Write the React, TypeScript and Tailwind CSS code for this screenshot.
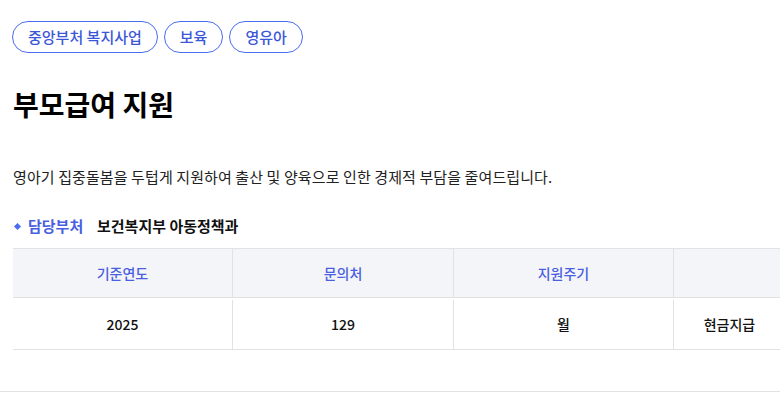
import React from "react";

const tags = ["중앙부처 복지사업", "보육", "영유아"];

const columns = [
  { head: "기준연도", value: "2025", w: "w-[219px]" },
  { head: "문의처", value: "129", w: "w-[221px]" },
  { head: "지원주기", value: "월", w: "w-[220px]" },
  { head: "", value: "현금지급", w: "w-[112px]" },
];

export default function App() {
  return (
    <div className="h-[410px] w-[780px] overflow-hidden bg-white font-['Noto_Sans_CJK_KR','Noto_Sans',sans-serif] text-[#222]">
      <div className="pl-3 pt-[21px]">
        <div className="flex gap-[6px]">
          {tags.map((t) => (
            <span
              key={t}
              className="flex h-[32px] items-center rounded-full border border-[#4a6cf0] px-[15px] text-[15px] font-medium text-[#3b57d8]"
            >
              {t}
            </span>
          ))}
        </div>

        <h1 className="mt-[33px] pl-px text-[28px] font-bold leading-[36px] text-black">
          부모급여 지원
        </h1>

        <p className="mt-[44px] pl-px text-[15px] leading-[22px] tracking-[0.1px]">
          영아기 집중돌봄을 두텁게 지원하여 출산 및 양육으로 인한 경제적 부담을 줄여드립니다.
        </p>

        <div className="mt-[27px] flex items-center pl-[2px] text-[15px] leading-[22px]">
          <span className="ml-[1px] mr-[8px] size-[5px] rotate-45 bg-[#4a6cf0]" />
          <span className="w-[69px] font-semibold text-[#4a5fe0]">담당부처</span>
          <span className="font-bold text-[#111]">보건복지부 아동정책과</span>
        </div>

        <div className="mt-[11px] ml-px flex w-max border-t border-[#e2e2e2]">
          {columns.map((c, i) => (
            <div key={i} className={`${c.w} shrink-0`}>
              <div
                className={`flex h-[49px] items-center justify-center border-b border-[#e2e2e2] bg-[#f4f5f9] text-[14px] font-medium text-[#4a5fe0] ${
                  i > 0 ? "border-l" : ""
                }`}
              >
                {c.head}
              </div>
              <div className="flex h-[52px] items-center border-b border-[#e2e2e2]">
                <div
                  className={`flex h-[49px] w-full items-center justify-center self-end text-[14px] font-medium text-[#111] ${
                    i > 0 ? "border-l border-[#e2e2e2]" : ""
                  }`}
                >
                  {c.value}
                </div>
              </div>
            </div>
          ))}
        </div>
      </div>

      <div className="mt-[41px] border-t border-[#e2e2e2]" />
    </div>
  );
}
